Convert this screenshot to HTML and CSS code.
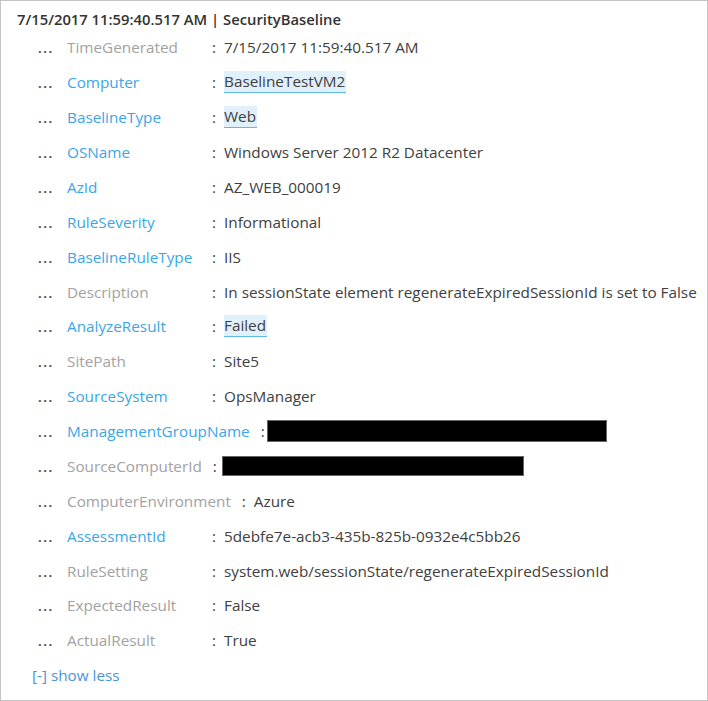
FILE: index.html
```html
<!DOCTYPE html>
<html>
<head>
<meta charset="utf-8">
<link rel="stylesheet" href="styles.css">
</head>
<body>
<div class="panel">
  <div class="header">7/15/2017 11:59:40.517 AM | SecurityBaseline</div>
  <div class="rows">
    <div class="row"><span class="dots">...</span><span class="label gray">TimeGenerated</span><span class="colon">:</span><span class="value">7/15/2017 11:59:40.517 AM</span></div>
    <div class="row"><span class="dots">...</span><span class="label blue">Computer</span><span class="colon">:</span><span class="value hl">BaselineTestVM2</span></div>
    <div class="row"><span class="dots">...</span><span class="label blue">BaselineType</span><span class="colon">:</span><span class="value hl">Web</span></div>
    <div class="row"><span class="dots">...</span><span class="label blue">OSName</span><span class="colon">:</span><span class="value">Windows Server 2012 R2 Datacenter</span></div>
    <div class="row"><span class="dots">...</span><span class="label blue">AzId</span><span class="colon">:</span><span class="value">AZ_WEB_000019</span></div>
    <div class="row"><span class="dots">...</span><span class="label blue">RuleSeverity</span><span class="colon">:</span><span class="value">Informational</span></div>
    <div class="row"><span class="dots">...</span><span class="label blue">BaselineRuleType</span><span class="colon">:</span><span class="value">IIS</span></div>
    <div class="row"><span class="dots">...</span><span class="label gray">Description</span><span class="colon">:</span><span class="value">In sessionState element regenerateExpiredSessionId is set to False</span></div>
    <div class="row"><span class="dots">...</span><span class="label blue">AnalyzeResult</span><span class="colon">:</span><span class="value hl">Failed</span></div>
    <div class="row"><span class="dots">...</span><span class="label gray">SitePath</span><span class="colon">:</span><span class="value">Site5</span></div>
    <div class="row"><span class="dots">...</span><span class="label blue">SourceSystem</span><span class="colon">:</span><span class="value">OpsManager</span></div>
    <div class="row"><span class="dots">...</span><span class="label blue">ManagementGroupName</span><span class="colon">:</span><span class="redact redact-mg"></span></div>
    <div class="row"><span class="dots">...</span><span class="label gray">SourceComputerId</span><span class="colon">:</span><span class="redact redact-sc"></span></div>
    <div class="row"><span class="dots">...</span><span class="label gray">ComputerEnvironment</span><span class="colon">:</span><span class="value">Azure</span></div>
    <div class="row"><span class="dots">...</span><span class="label blue">AssessmentId</span><span class="colon">:</span><span class="value">5debfe7e-acb3-435b-825b-0932e4c5bb26</span></div>
    <div class="row"><span class="dots">...</span><span class="label gray">RuleSetting</span><span class="colon">:</span><span class="value">system.web/sessionState/regenerateExpiredSessionId</span></div>
    <div class="row"><span class="dots">...</span><span class="label gray">ExpectedResult</span><span class="colon">:</span><span class="value">False</span></div>
    <div class="row"><span class="dots">...</span><span class="label gray">ActualResult</span><span class="colon">:</span><span class="value">True</span></div>
  </div>
  <div class="more">[-] show less</div>
</div>
</body>
</html>
```
FILE: styles.css
```css
html, body {
  margin: 0;
  padding: 0;
  background: #ffffff;
}
body {
  font-family: "Open Sans", "Noto Sans", sans-serif;
  font-size: 15.3px;
  color: #404040;
}
.panel {
  width: 708px;
  height: 701px;
  box-sizing: border-box;
  border: 1px solid #c4c4c4;
  padding: 8px 0 0 16px;
}
.header {
  font-weight: 600;
  font-size: 14.8px;
  color: #333333;
  height: 21px;
  line-height: 21px;
}
.rows {
  display: flex;
  flex-direction: column;
}
.row {
  display: flex;
  align-items: center;
  height: 34.88px;
}
.dots {
  width: 29px;
  padding-left: 21px;
  color: #505050;
  font-weight: 700;
  font-size: 13px;
  letter-spacing: 1.5px;
  position: relative;
  top: 1px;
}
.label {
  min-width: 134px;
  padding-right: 11px;
  white-space: nowrap;
}
.gray { color: #a2a2a2; }
.blue { color: #3aa6e8; }
.colon {
  width: 12px;
  color: #404040;
}
.value {
  white-space: nowrap;
}
.hl {
  background: #e0f1fb;
  border-bottom: 1px solid #5fb8e8;
  line-height: 21px;
  padding: 0 1px 0 0;
}
.redact {
  display: block;
  background: #000000;
  border: 1px solid #666666;
}
.redact-mg {
  width: 338px;
  height: 20px;
  margin-left: -6px;
}
.redact-sc {
  width: 300px;
  height: 18px;
  margin-left: -3px;
}
.more {
  color: #4a94d8;
  padding-left: 15px;
  height: 35px;
  line-height: 35px;
}
```
